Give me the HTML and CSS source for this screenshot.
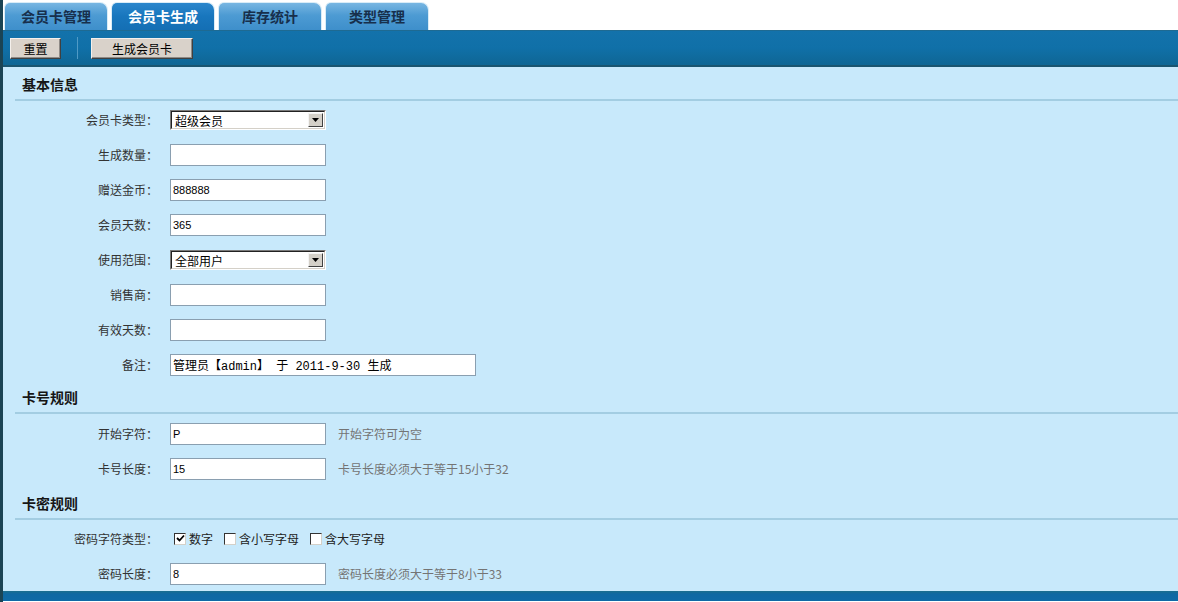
FILE: index.html
```html
<!DOCTYPE html>
<html lang="zh-CN">

<head>
    <meta charset="UTF-8">
    <title>会员卡生成</title>
    <link rel="stylesheet" href="styles.css">
</head>

<body>
    <!-- Tab strip -->
    <div class="tabs">
        <a class="tab">会员卡管理</a>
        <a class="tab active">会员卡生成</a>
        <a class="tab">库存统计</a>
        <a class="tab">类型管理</a>
    </div>

    <!-- Toolbar -->
    <div class="toolbar">
        <button class="btn btn-small">重置</button>
        <span class="sep"></span>
        <button class="btn btn-wide">生成会员卡</button>
    </div>

    <div class="content">
        <h3 class="section-title">基本信息</h3>
        <div class="group">
            <div class="row">
                <label class="label">会员卡类型：</label>
                <div class="select-box">
                    <select class="select">
                        <option>超级会员</option>
                    </select>
                    <span class="drop"><svg width="7" height="4" viewBox="0 0 7 4"><path d="M0 0h7L3.5 4z" fill="#000"/></svg></span>
                </div>
            </div>
            <div class="row">
                <label class="label">生成数量：</label>
                <input class="field" type="text" value="">
            </div>
            <div class="row">
                <label class="label">赠送金币：</label>
                <input class="field" type="text" value="888888">
            </div>
            <div class="row">
                <label class="label">会员天数：</label>
                <input class="field" type="text" value="365">
            </div>
            <div class="row">
                <label class="label">使用范围：</label>
                <div class="select-box">
                    <select class="select">
                        <option>全部用户</option>
                    </select>
                    <span class="drop"><svg width="7" height="4" viewBox="0 0 7 4"><path d="M0 0h7L3.5 4z" fill="#000"/></svg></span>
                </div>
            </div>
            <div class="row">
                <label class="label">销售商：</label>
                <input class="field" type="text" value="">
            </div>
            <div class="row">
                <label class="label">有效天数：</label>
                <input class="field" type="text" value="">
            </div>
            <div class="row">
                <label class="label">备注：</label>
                <input class="field field-long" type="text" value="管理员【admin】 于 2011-9-30 生成">
            </div>
        </div>

        <h3 class="section-title">卡号规则</h3>
        <div class="group group-mid">
            <div class="row">
                <label class="label">开始字符：</label>
                <input class="field" type="text" value="P">
                <span class="hint">开始字符可为空</span>
            </div>
            <div class="row">
                <label class="label">卡号长度：</label>
                <input class="field" type="text" value="15">
                <span class="hint">卡号长度必须大于等于15小于32</span>
            </div>
        </div>

        <h3 class="section-title">卡密规则</h3>
        <div class="group">
            <div class="row">
                <label class="label">密码字符类型：</label>
                <div class="checks">
                    <span class="check"><span class="box"><svg width="9" height="9" viewBox="0 0 9 9"><path d="M1 4l2.5 2.5L8 1.5" fill="none" stroke="#000" stroke-width="1.8"/></svg></span>数字</span>
                    <span class="check"><span class="box"></span>含小写字母</span>
                    <span class="check"><span class="box"></span>含大写字母</span>
                </div>
            </div>
            <div class="row">
                <label class="label">密码长度：</label>
                <input class="field" type="text" value="8">
                <span class="hint">密码长度必须大于等于8小于33</span>
            </div>
        </div>
    </div>

    <div class="footer-bar"></div>
</body>

</html>
```

FILE: styles.css
```css
/* Basic Reset */
* {
    margin: 0;
    padding: 0;
    box-sizing: border-box;
}

body {
    font-family: "Noto Sans CJK SC", "Liberation Sans", sans-serif;
    font-size: 12px;
    color: #333;
    background-color: #fff;
    border-left: 3px solid #1b4454;
    min-height: 602px;
}

/* Tabs */
.tabs {
    display: flex;
    gap: 3px;
    padding: 2px 0 0 1px;
    height: 30px;
}

.tab {
    width: 104px;
    height: 28px;
    line-height: 27px;
    text-align: center;
    font-size: 14px;
    font-weight: bold;
    color: #172f4c;
    background: linear-gradient(#78b6e2, #4d9bd3 45%, #3e8fcb);
    border: 1px solid #d9ecf7;
    border-bottom: none;
    border-radius: 6px 8px 0 0;
}

.tab.active {
    color: #fff;
    background: linear-gradient(#2a86cc, #1876bd 50%, #146fb4);
}

/* Toolbar */
.toolbar {
    display: flex;
    align-items: center;
    height: 37px;
    padding-left: 7px;
    background: linear-gradient(#1372ab, #1070a8 50%, #0f6694);
    border-top: 1px solid #1e6a92;
    border-bottom: 2px solid #1a5570;
}

.btn {
    height: 21px;
    font-family: "Noto Sans CJK SC", sans-serif;
    font-size: 12px;
    color: #000;
    background-color: #d9d2ca;
    border: 1px solid;
    border-color: #f4f0ec #404040 #404040 #f4f0ec;
    box-shadow: inset -1px -1px 0 #8e8a86;
}

.btn-small {
    width: 51px;
}

.btn-wide {
    width: 102px;
}

.sep {
    width: 1px;
    height: 22px;
    margin: 0 13px 0 16px;
    background-color: #4f9ac6;
}

/* Content */
.content {
    background-color: #c8e9fb;
    padding-top: 2px;
}

.section-title {
    margin-left: 12px;
    padding: 6px 0 6px 7px;
    line-height: 18px;
    font-size: 14px;
    font-weight: bold;
    color: #161616;
    border-bottom: 2px solid #a3cde2;
}

.group {
    padding-top: 1px;
}

.group-mid {
    padding-top: 2px;
    padding-bottom: 2px;
}

.row {
    display: flex;
    align-items: center;
    height: 35px;
}

.label {
    width: 155px;
    margin-right: 12px;
    text-align: right;
    color: #333;
}

.field {
    width: 156px;
    height: 22px;
    padding: 0 2px;
    font-family: "Liberation Sans", sans-serif;
    font-size: 11px;
    color: #000;
    background-color: #fff;
    border: 1px solid #8a9fb0;
    outline: none;
}

.field-long {
    width: 306px;
    font-family: "Liberation Mono", "Noto Sans CJK SC", monospace;
    font-size: 12px;
}

.hint {
    margin-left: 12px;
    color: #747474;
}

/* Select imitation of old windows style */
.select-box {
    position: relative;
    width: 156px;
    height: 20px;
    border: 1px solid;
    border-color: #7a7a7a #fff #fff #7a7a7a;
    background-color: #fff;
}

.select {
    appearance: none;
    width: 100%;
    height: 100%;
    padding-left: 3px;
    font-family: "Noto Sans CJK SC", sans-serif;
    font-size: 12px;
    color: #000;
    background: #fff;
    border: 1px solid;
    border-color: #222 #d4d0c8 #d4d0c8 #222;
    outline: none;
}

.drop {
    position: absolute;
    top: 2px;
    right: 2px;
    width: 15px;
    height: 14px;
    display: flex;
    align-items: center;
    justify-content: center;
    background-color: #d4d0c8;
    border: 1px solid;
    border-color: #f4f4f4 #404040 #404040 #f4f4f4;
}

/* Checkboxes */
.checks {
    display: flex;
    align-items: center;
    gap: 11px;
    padding-left: 4px;
}

.check {
    display: flex;
    align-items: center;
    gap: 3px;
    color: #222;
}

.box {
    width: 12px;
    height: 12px;
    display: flex;
    align-items: center;
    justify-content: center;
    background-color: #fff;
    border: 1px solid;
    border-color: #333 #d4d0c8 #d4d0c8 #333;
}

/* Bottom bar */
.footer-bar {
    height: 10px;
    background: linear-gradient(#1b6e8e, #0f68a2 30%, #0f6aa6);
}
```
